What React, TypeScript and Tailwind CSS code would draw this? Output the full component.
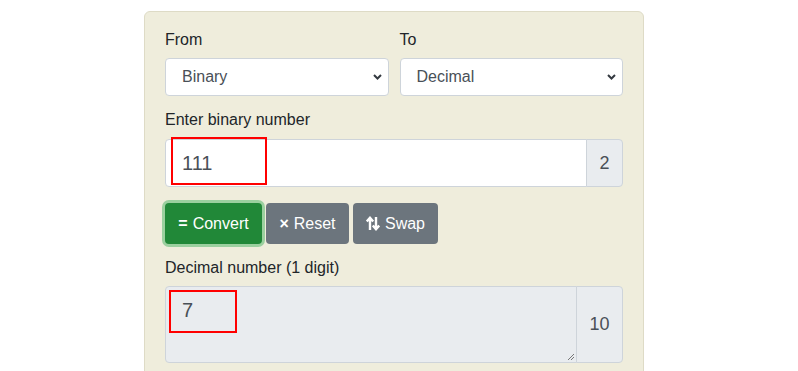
import React from "react";

function Chevron() {
  return (
    <svg
      className="absolute right-[6px] top-1/2 -translate-y-1/2 pointer-events-none"
      width="9"
      height="7"
      viewBox="0 0 9 7"
    >
      <path d="M1 1.5 L4.5 5 L8 1.5" fill="none" stroke="#343a40" strokeWidth="2" />
    </svg>
  );
}

function SelectBox({ label, value }: { label: string; value: string }) {
  return (
    <div className="flex-1 flex flex-col">
      <label className="mb-[6px] leading-6 text-[#212529]">{label}</label>
      <div className="relative h-[38px] rounded-[4px] border border-[#ced4da] bg-white flex items-center pl-4 text-[#495057]">
        {value}
        <Chevron />
      </div>
    </div>
  );
}

function SwapIcon() {
  return (
    <svg width="14" height="15" viewBox="0 0 14 15" className="mr-[5px]">
      <path d="M4 14 V2.5 M0.8 5.5 L4 1.8 L7.2 5.5" fill="none" stroke="white" strokeWidth="2.4" />
      <path d="M10 1 V12.5 M6.8 9.5 L10 13.2 L13.2 9.5" fill="none" stroke="white" strokeWidth="2.4" />
    </svg>
  );
}

export default function App() {
  return (
    <div
      className="w-[798px] h-[371px] overflow-hidden bg-white"
      style={{ fontFamily: '"Liberation Sans", Arial, sans-serif' }}
    >
      <div className="ml-[144px] mt-[11px] w-[500px] h-[400px] rounded-[6px] border border-[#dedbc6] bg-[#efeddc] px-5 pt-[16px] text-base">
        <div className="flex gap-[11px]">
          <SelectBox label="From" value="Binary" />
          <SelectBox label="To" value="Decimal" />
        </div>

        <label className="block mt-3 mb-[7px] leading-6 text-[#212529]">Enter binary number</label>
        <div className="flex h-[48px]">
          <div className="relative flex-1 rounded-l-[4px] border border-[#ced4da] bg-white flex items-center pl-4 text-[20px] text-[#495057]">
            111
            <div className="absolute left-[5px] top-[-3px] w-[96px] h-[48px] border-2 border-[#ff0000]"></div>
          </div>
          <div className="w-[37px] -ml-px rounded-r-[4px] border border-[#ced4da] bg-[#e9ecef] flex items-center justify-center text-[18px] text-[#495057]">
            2
          </div>
        </div>

        <div className="flex gap-1 mt-4">
          <button className="h-[41px] w-[97px] rounded-[4px] bg-[#218838] text-white shadow-[0_0_0_3px_rgba(72,180,97,0.5)] flex items-center justify-center">
            <span className="font-bold mr-[5px]">=</span>Convert
          </button>
          <button className="h-[41px] w-[83px] rounded-[4px] bg-[#6c757d] text-white flex items-center justify-center">
            <span className="font-bold mr-[5px]">×</span>Reset
          </button>
          <button className="h-[41px] w-[85px] rounded-[4px] bg-[#6c757d] text-white flex items-center justify-center">
            <SwapIcon />
            Swap
          </button>
        </div>

        <label className="block mt-3 mb-[6px] leading-6 text-[#212529]">Decimal number (1 digit)</label>
        <div className="flex h-[77px]">
          <div className="relative flex-1 rounded-l-[4px] border border-[#ced4da] bg-[#e9ecef] pl-4 pt-2 leading-[30px] text-[20px] text-[#495057]">
            7
            <div className="absolute left-[3px] top-[3px] w-[68px] h-[43px] border-2 border-[#ff0000]"></div>
            <svg className="absolute right-[1px] bottom-[1px]" width="9" height="9" viewBox="0 0 9 9">
              <path d="M8 2 L2 8 M8 5 L5 8" stroke="#777" strokeWidth="1" />
            </svg>
          </div>
          <div className="w-[47px] -ml-px rounded-r-[4px] border border-[#ced4da] bg-[#e9ecef] flex items-center justify-center text-[18px] text-[#495057]">
            10
          </div>
        </div>
      </div>
    </div>
  );
}
